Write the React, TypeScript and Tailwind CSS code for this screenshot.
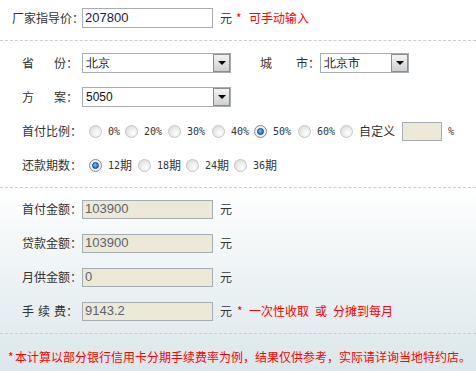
const cjk = "font-[family-name:'Noto_Sans_CJK_SC',sans-serif]";
const num = "font-[family-name:'Liberation_Sans',Arial,sans-serif]";
const mono = "font-[family-name:'DejaVu_Sans_Mono',monospace]";

function Radio({ checked = false }: { checked?: boolean }) {
  if (checked) {
    return (
      <span className="flex h-[13px] w-[13px] shrink-0 items-center justify-center rounded-full border border-[#7c8a99] bg-[#eef0f2]">
        <span className="h-[7px] w-[7px] rounded-full border border-[#0b3f7c] bg-[radial-gradient(circle_at_40%_35%,#6fc0ff,#0a5db8)]" />
      </span>
    );
  }
  return (
    <span className="h-[13px] w-[13px] shrink-0 rounded-full border border-[#c4c4c4] bg-[radial-gradient(circle_at_65%_65%,#ffffff,#d6d6d6)]" />
  );
}

function Option({ value, suffix = "", width, checked }: { value: string; suffix?: string; width: string; checked?: boolean }) {
  return (
    <div className={"flex items-center " + width}>
      <Radio checked={checked} />
      <span className="ml-[6px] flex items-center whitespace-nowrap">
        <span className={"text-[10px] " + mono}>{value}</span>
        {suffix && <span>{suffix}</span>}
      </span>
    </div>
  );
}

function Select({ value, width }: { value: string; width: string }) {
  return (
    <div className={"flex h-[20px] items-center border border-[#a5acb2] bg-white " + width}>
      <span className={"flex-1 pl-[3px] text-[12px] text-[#111] " + num}>{value}</span>
      <span className="flex h-[18px] w-[17px] items-center justify-center border border-[#8d8d8d] bg-linear-to-b from-[#f4f4f4] to-[#cfcfcf]">
        <span className="h-0 w-0 border-x-[4px] border-t-[4px] border-x-transparent border-t-black" />
      </span>
    </div>
  );
}

function ReadBox({ value }: { value: string }) {
  return (
    <div className={"flex h-[19px] w-[131px] items-center border border-[#a5acb2] bg-[#ece9d8] pl-[2px] text-[13px] text-[#5c6270] " + num}>
      {value}
    </div>
  );
}

function Spread({ chars, width, pr = "" }: { chars: string[]; width: string; pr?: string }) {
  return (
    <div className={"flex justify-between whitespace-nowrap " + width + " " + pr}>
      {chars.map((c) => (
        <span key={c}>{c}</span>
      ))}
    </div>
  );
}

const results = [
  { label: "首付金额：", value: "103900" },
  { label: "贷款金额：", value: "103900" },
  { label: "月供金额：", value: "0" },
];

export default function App() {
  return (
    <div className={"h-[371px] w-[476px] overflow-hidden bg-linear-to-b from-white from-50% to-[#dbe7eb] text-[12px] text-[#333] " + cjk}>
      <div className="flex h-[36px] items-center">
        <span className="ml-[12px] w-[70px] whitespace-nowrap">厂家指导价：</span>
        <div className={"flex h-[20px] w-[131px] items-center border border-[#a5acb2] bg-white pl-[2px] text-[13px] text-[#1c1c3c] " + num}>
          207800
        </div>
        <span className="ml-[7px]">元</span>
        <span className="ml-[4px] flex text-[#f00]">
          <span className="w-[13px]">*</span>
          可手动输入
        </span>
      </div>
      <div className="mt-[4px] border-t border-dashed border-[#cccccc]" />

      <div className="py-[5px]">
        <div className="flex h-[34px] items-center">
          <div className="ml-[22px] w-[60px]">
            <Spread chars={["省", "份："]} width="w-[60px]" pr="pr-[4px]" />
          </div>
          <Select value="北京" width="w-[149px]" />
          <div className="ml-[29px] w-[60px]">
            <Spread chars={["城", "市："]} width="w-[60px]" />
          </div>
          <Select value="北京市" width="w-[89px]" />
        </div>

        <div className="flex h-[34px] items-center">
          <div className="ml-[22px] w-[60px]">
            <Spread chars={["方", "案："]} width="w-[60px]" pr="pr-[4px]" />
          </div>
          <Select value="5050" width="w-[149px]" />
        </div>

        <div className="flex h-[34px] items-center">
          <span className="ml-[22px] w-[60px] whitespace-nowrap">首付比例：</span>
          <div className="ml-[7px] flex items-center">
            <Option value="0%" width="w-[36px]" />
            <Option value="20%" width="w-[43px]" />
            <Option value="30%" width="w-[44px]" />
            <Option value="40%" width="w-[42px]" />
            <Option value="50%" width="w-[44px]" checked />
            <Option value="60%" width="w-[42px]" />
            <Radio />
            <span className="ml-[6px]">自定义</span>
            <div className="ml-[7px] h-[19px] w-[40px] border border-[#a5acb2] bg-[#ece9d8]" />
            <span className={"ml-[6px] text-[10px] " + mono}>%</span>
          </div>
        </div>

        <div className="flex h-[34px] items-center">
          <span className="ml-[22px] w-[60px] whitespace-nowrap">还款期数：</span>
          <div className="ml-[7px] flex items-center">
            <Option value="12" suffix="期" width="w-[49px]" checked />
            <Option value="18" suffix="期" width="w-[48px]" />
            <Option value="24" suffix="期" width="w-[48px]" />
            <Option value="36" suffix="期" width="w-[48px]" />
          </div>
        </div>
      </div>
      <div className="border-t border-dashed border-[#cccccc]" />

      <div className="pt-[4px] pb-[5px]">
        {results.map((r) => (
          <div key={r.label} className="flex h-[34px] items-center">
            <span className="ml-[22px] w-[60px] whitespace-nowrap">{r.label}</span>
            <ReadBox value={r.value} />
            <span className="ml-[7px]">元</span>
          </div>
        ))}
        <div className="flex h-[34px] items-center">
          <div className="ml-[22px] flex w-[60px]">
            <Spread chars={["手", "续", "费"]} width="w-[44px]" />
            <span>：</span>
          </div>
          <ReadBox value="9143.2" />
          <span className="ml-[7px]">元</span>
          <span className="ml-[5px] flex whitespace-nowrap text-[#f00]">
            <span className="w-[12px]">*</span>
            一次性收取
            <span className="mx-[6px]">或</span>
            分摊到每月
          </span>
        </div>
      </div>
      <div className="border-t border-dashed border-[#cccccc]" />

      <div className="flex h-[37px] items-center whitespace-nowrap pt-[8px] pl-[8px] text-[#f00]">
        <span className="w-[7px]">*</span>
        本计算以部分银行信用卡分期手续费率为例，结果仅供参考，实际请详询当地特约店。
      </div>
    </div>
  );
}
